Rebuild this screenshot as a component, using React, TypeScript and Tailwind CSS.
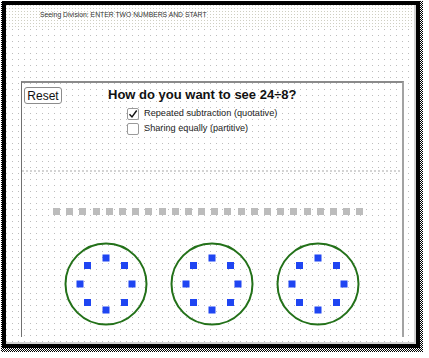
import React from "react";

const DOTS = [
  [0, -26],
  [18.5, -18.5],
  [26, 0],
  [18.5, 18.5],
  [0, 26],
  [-18.5, 18.5],
  [-26, 0],
  [-18.5, -18.5],
];

function Group() {
  return (
    <svg width="84" height="84" viewBox="0 0 84 84">
      <circle cx="42" cy="42" r="40.5" fill="none" stroke="#237119" strokeWidth="2" />
      {DOTS.map(([dx, dy], i) => (
        <rect key={i} x={42 + dx - 3.5} y={42 + dy - 3.5} width="7" height="7" fill="#1f45f2" />
      ))}
    </svg>
  );
}

function Check({ checked, label }: { checked?: boolean; label: string }) {
  return (
    <div className="flex items-center gap-[5px] h-[15px]">
      <span className="w-[12px] h-[12px] border border-[#9a9a9a] rounded-[2px] bg-white flex items-center justify-center">
        {checked && (
          <svg width="10" height="10" viewBox="0 0 10 10">
            <path d="M1.5 5.2 L4 8 L8.7 1.5" fill="none" stroke="#111" strokeWidth="1.4" />
          </svg>
        )}
      </span>
      <span className="text-[9.2px] text-[#222] leading-none">{label}</span>
    </div>
  );
}

export default function App() {
  return (
    <div className="w-[429px] h-[358px] bg-white font-['Liberation_Sans',Arial,sans-serif] overflow-hidden">
      <div className="ml-[1px] mt-[1px] w-[422px] h-[351px] pr-[3px] pb-[3px] bg-[repeating-conic-gradient(#000_0_25%,#fff_0_50%)] bg-[length:2px_2px]">
        <div className="ml-[1px] mt-[1px] w-[418px] h-[347px] border-[4px] border-black bg-white">
          <div className="w-full h-full border-r-2 border-b-2 border-[#d2d2d2] bg-white bg-[linear-gradient(to_right,transparent_1px,#fff_1px),linear-gradient(#bdbdbd_1px,transparent_1px)] bg-[length:6px_6px]">
            {/* header */}
            <div className="h-[23px] pl-[34px] pt-[6px] text-[6.8px] leading-[8px] text-[#333] bg-white bg-[linear-gradient(to_right,transparent_1px,#fff_1px),linear-gradient(#cfcfc2_1px,transparent_1px)] bg-[length:3px_3px]">
              Seeing Division: ENTER TWO NUMBERS AND START
            </div>

            {/* panel */}
            <div className="ml-[15px] mt-[53px] w-[383px] h-[256px] border-l border-t-2 border-r-2 border-l-[#707070] border-t-[#8a8a8a] border-r-[#a3a3a3]">
              <div className="flex items-start pt-[4px] pl-[2px]">
                <div className="w-[38px] h-[17px] border border-[#8c8c8c] rounded-[3px] bg-white flex items-center justify-center text-[12px] text-[#111]">
                  Reset
                </div>
                <div className="ml-[46px]">
                  <div className="text-[13px] font-bold text-[#111] leading-[16px]">
                    How do you want to see 24÷8?
                  </div>
                  <div className="ml-[19px] mt-[3px] flex flex-col">
                    <Check checked label="Repeated subtraction (quotative)" />
                    <Check label="Sharing equally (partitive)" />
                  </div>
                </div>
              </div>

              <div className="mt-[34px] w-[378px] border-t-2 border-dotted border-[#d4d4d4]" />

              <div className="mt-[36px] ml-[31px] flex gap-[6.2px]">
                {Array.from({ length: 24 }).map((_, i) => (
                  <span key={i} className="w-[7px] h-[7px] bg-[#bcbcbc]" />
                ))}
              </div>

              <div className="mt-[27px] ml-[42px] flex gap-[22px]">
                <Group />
                <Group />
                <Group />
              </div>
            </div>
          </div>
        </div>
      </div>
    </div>
  );
}
